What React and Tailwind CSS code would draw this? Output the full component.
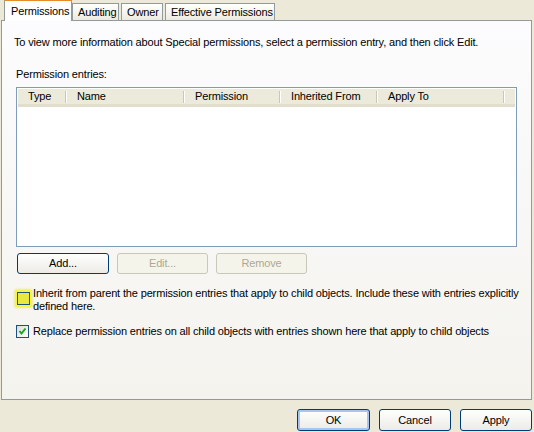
import React from "react";

const font = { fontFamily: "Tahoma, 'Liberation Sans', Arial, sans-serif" };

const XpButton = ({ children, disabled, focused, className = "" }) => (
    <button
        className={
            "h-[21px] rounded-[3px] border text-[11px] " +
            (disabled
                ? "border-[#c9c7ba] bg-[#f5f4ea] text-[#aca899] "
                : "border-[#003c74] bg-gradient-to-b from-white to-[#ecebe6] text-black ") +
            (focused ? "shadow-[inset_0_0_0_2px_#a9c4ee] " : "") +
            className
        }
    >
        {children}
    </button>
);

const Tab = ({ label, active, className = "" }) => (
    <div
        className={
            active
                ? "relative z-10 -mb-px flex h-[21px] items-center whitespace-nowrap border border-b-0 border-[#919b9c] border-t-[#e68b2c] bg-white px-[6px] pt-px text-[11px] " + className
                : "mt-[3px] flex h-[17px] items-center whitespace-nowrap border border-b-0 border-[#919b9c] bg-gradient-to-b from-white to-[#eceae0] px-[5px] text-[11px] " + className
        }
    >
        {label}
    </div>
);

const columns = [
    { label: "Type", w: "w-[49px]" },
    { label: "Name", w: "w-[118px]" },
    { label: "Permission", w: "w-[96px]" },
    { label: "Inherited From", w: "w-[97px]" },
    { label: "Apply To", w: "w-[127px]" },
];

export default function App() {
    return (
        <div className="flex h-[432px] w-[534px] flex-col bg-[#ece9d8] tracking-[-0.15px] text-black" style={font}>
            {/* tabs */}
            <div className="flex items-end pl-[4px]">
                <Tab label="Permissions" active className="w-[68px]" />
                <Tab label="Auditing" className="w-[47px]" />
                <Tab label="Owner" className="ml-[2px] w-[42px]" />
                <Tab label="Effective Permissions" className="ml-[2px] w-[110px]" />
            </div>

            {/* tab page */}
            <div className="ml-[1px] mr-[2px] h-[380px] border border-[#919b9c] bg-gradient-to-b from-[#fcfcfe] to-[#f4f3ee] px-[12px] pt-[15px] text-[11px]">
                <p className="leading-[13px]">
                    To view more information about Special permissions, select a permission entry, and then click Edit.
                </p>

                <p className="mt-[19px] ml-[2px] leading-[13px]">Permission entries:</p>

                <div className="mt-[6px] ml-[2px] h-[160px] w-[501px] border border-[#7f9db9] bg-white p-px">
                    <div className="flex h-[18px] border-b-[3px] border-[#e2decd] bg-[#ebeadb]">
                        {columns.map((c) => (
                            <div key={c.label} className={"flex items-center pl-[10px] " + c.w}>
                                <span className="flex-1">{c.label}</span>
                                <span className="h-[12px] w-[2px] border-l border-r border-l-[#cbc7b8] border-r-white" />
                            </div>
                        ))}
                    </div>
                </div>

                <div className="mt-[6px] ml-[3px] flex gap-[8px]">
                    <XpButton className="w-[92px]">Add...</XpButton>
                    <XpButton disabled className="w-[91px]">Edit...</XpButton>
                    <XpButton disabled className="w-[91px]">Remove</XpButton>
                </div>

                <div className="mt-[13px] ml-[1px] flex items-start">
                    <div className="mt-[3px] flex h-[17px] w-[17px] shrink-0 items-center justify-center bg-[#f5f542] shadow-[0_0_3px_#e0e040]">
                        <div className="h-[13px] w-[13px] border border-[#1c5180] bg-[#e8e840]" />
                    </div>
                    <p className="ml-[1px] leading-[13px]">
                        Inherit from parent the permission entries that apply to child objects. Include these with entries explicitly defined here.
                    </p>
                </div>

                <div className="mt-[12px] ml-[2px] flex items-center">
                    <div className="flex h-[13px] w-[13px] shrink-0 items-center justify-center border border-[#1c5180] bg-gradient-to-br from-[#dcdcd7] to-white">
                        <svg width="9" height="9" viewBox="0 0 9 9">
                            <path d="M1.5 4 L3.5 6.5 L7.5 1.5" fill="none" stroke="#21a121" strokeWidth="2" />
                        </svg>
                    </div>
                    <p className="ml-[4px] leading-[13px]">
                        Replace permission entries on all child objects with entries shown here that apply to child objects
                    </p>
                </div>
            </div>

            {/* dialog buttons */}
            <div className="mt-[9px] flex justify-end gap-[9px] pr-[2px] text-[11px]">
                <XpButton focused className="h-[22px] w-[73px]">OK</XpButton>
                <XpButton className="h-[22px] w-[72px]">Cancel</XpButton>
                <XpButton className="h-[22px] w-[72px]">Apply</XpButton>
            </div>
        </div>
    );
}
